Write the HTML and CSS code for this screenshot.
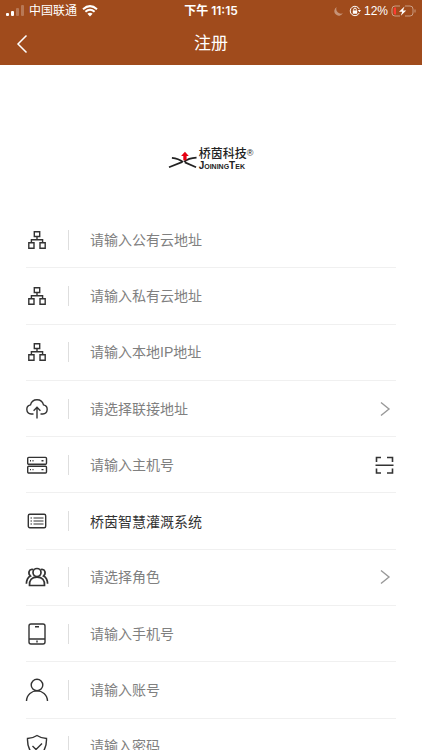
FILE: index.html
```html
<!DOCTYPE html>
<html lang="zh-CN">
<head>
<meta charset="utf-8">
<meta name="viewport" content="width=device-width, initial-scale=1">
<title>注册</title>
<link rel="stylesheet" href="styles.css">
</head>
<body>
<svg class="defs" aria-hidden="true">
  <symbol id="network" viewBox="0 0 24 24">
    <path d="M9.3 3.8h5.4v4.7H9.3zM3.8 14.8H9v5.4H3.8zM15 14.8h5.2v5.4H15zM12 8.5v3.2M6.4 14.8v-3.1h11.2v3.1"/>
  </symbol>
  <symbol id="chevron" viewBox="0 0 24 24">
    <path d="M9 5.5l8 6.5-8 6.5"/>
  </symbol>
</svg>
<header class="header">
  <div class="status">
    <div class="status-side">
      <svg class="signal" viewBox="0 0 18 12" aria-hidden="true">
        <rect x="0" y="8" width="3" height="3" rx="1"/><rect x="5" y="6" width="3" height="5" rx="1"/>
        <rect class="faint" x="10" y="3" width="3" height="8" rx="1"/><rect class="faint" x="15" y="0" width="3" height="11" rx="1"/>
      </svg>
      <span>中国联通</span>
      <svg class="wifi" viewBox="0 0 16 12" aria-hidden="true">
        <path d="M1 4.2Q8-2 15 4.2M3.4 6.8q4.6-4 9.2 0"/><path class="solid" d="M5.4 8.8q2.6-2 5.2 0L8 11.5z"/>
      </svg>
    </div>
    <time class="clock">下午 11:15</time>
    <div class="status-side status-right">
      <svg class="moon" viewBox="0 0 12 12" aria-hidden="true"><path d="M4 1.2A5 5 0 1 0 10.8 8 5.2 5.2 0 0 1 4 1.2z"/></svg>
      <svg class="lock" viewBox="0 0 12 12" aria-hidden="true">
        <path d="M10.3 4.2A4.7 4.7 0 1 0 10.2 8M4.7 5.6V4.4a1.3 1.3 0 0 1 2.6 0v1.2"/><path class="solid" d="M3.8 5.4h4.4v3.3H3.8zM8.8 5h3.2l-1.5 2.3z"/>
      </svg>
      <span>12%</span>
      <svg class="battery" viewBox="0 0 25 12" aria-hidden="true">
        <path class="shell" d="M9 1H4a3 3 0 0 0-3 3v4a3 3 0 0 0 3 3h5M14 1h5a3 3 0 0 1 3 3v4a3 3 0 0 1-3 3h-5M24 4.5v3"/>
        <path class="low" d="M4 2.6h1v6.8H4q-1.3 0-1.3-1.4V4q0-1.4 1.3-1.4z"/>
        <path class="bolt" d="M13.5 1.5L8 6.8h3.2L9.8 10.8 15.2 5.4H12z"/>
      </svg>
    </div>
  </div>
  <div class="navbar">
    <button class="back" type="button" aria-label="返回">
      <svg viewBox="0 0 12 20" aria-hidden="true"><path d="M10.5 1.5L2 10l8.5 8.5"/></svg>
    </button>
    <h1 class="title">注册</h1>
  </div>
</header>
<main class="content">
  <div class="brand">
    <svg class="brand-mark" viewBox="0 0 30 20" aria-hidden="true">
      <path d="M0 17.5L14 12M3 7.8Q10 8.5 14.5 12M15.5 11.8Q20 8 28.5 7.5M16.5 12.5l11.5 5"/>
      <path class="arrow" d="M16.5 1.5l4 4.3h-2.3v4.4h-3.4V5.8h-2.3z"/>
    </svg>
    <div class="brand-text">
      <div class="brand-name">桥茵科技<sup class="reg">®</sup></div>
      <div class="brand-latin">JoiningTek</div>
    </div>
  </div>
  <form class="form">
    <div class="row">
      <label class="icon" for="public" aria-label="公有云地址"><svg viewBox="1 1 22 22"><use href="#network" width="24" height="24"/></svg></label>
      <input class="field" id="public" type="text" placeholder="请输入公有云地址">
    </div>
    <div class="row">
      <label class="icon" for="private" aria-label="私有云地址"><svg viewBox="1 1 22 22"><use href="#network" width="24" height="24"/></svg></label>
      <input class="field" id="private" type="text" placeholder="请输入私有云地址">
    </div>
    <div class="row">
      <label class="icon" for="local" aria-label="本地IP地址"><svg viewBox="1 1 22 22"><use href="#network" width="24" height="24"/></svg></label>
      <input class="field" id="local" type="text" placeholder="请输入本地IP地址">
    </div>
    <div class="row">
      <label class="icon" for="link" aria-label="联接地址"><svg viewBox="1 1 22 22"><path d="M8.5 17H6.2A4.6 4.6 0 0 1 5.5 7.9A6.7 6.7 0 0 1 18.5 7.9A4.6 4.6 0 0 1 17.8 17H15.5M12 21.5V10.5M8.6 13.7L12 10.3l3.4 3.4"/></svg></label>
      <select class="field" id="link"><option>请选择联接地址</option></select>
      <svg class="chevron" viewBox="0 0 24 24" aria-hidden="true"><use href="#chevron"/></svg>
    </div>
    <div class="row">
      <label class="icon" for="host" aria-label="主机号"><svg viewBox="1 1 22 22"><rect x="2.7" y="4.4" width="18.8" height="6.8" rx="1"/><rect x="2.7" y="13.2" width="18.8" height="6.8" rx="1"/><path d="M5 7.8h1M7.5 7.8h1M16.5 7.8h2M5 16.6h1M7.5 16.6h1M16.5 16.6h2"/></svg></label>
      <input class="field" id="host" type="text" placeholder="请输入主机号">
      <button class="scan" type="button" aria-label="扫描"><svg viewBox="0 0 24 24"><path d="M4.5 9V4.5H9M15 4.5h5.5V9M4.5 15.5V20H9M15 20h5.5v-4.5M3.5 12.2h18"/></svg></button>
    </div>
    <div class="row">
      <label class="icon" for="system" aria-label="系统名称"><svg viewBox="1 1 22 22"><rect x="3.3" y="5.3" width="17.4" height="13.4" rx="1.5"/><path class="fine" d="M5.5 9h1.5M5.5 12h1.5M5.5 15h1.5M8.5 9h10M8.5 12h10M8.5 15h10"/></svg></label>
      <input class="field" id="system" type="text" value="桥茵智慧灌溉系统">
    </div>
    <div class="row">
      <label class="icon" for="role" aria-label="角色"><svg class="group" viewBox="1 1 22 22"><circle cx="12" cy="7.5" r="4"/><path d="M4.5 20.5Q4 12.2 12 12.2T19.5 20.5zM8.3 4.5C3.5 3.5 2.8 8.5 5.5 11Q1.5 13 1.4 18.8M15.7 4.5c4.8-1 5.5 4 2.8 6.5Q22.5 13 22.6 18.8"/></svg></label>
      <select class="field" id="role"><option>请选择角色</option></select>
      <svg class="chevron" viewBox="0 0 24 24" aria-hidden="true"><use href="#chevron"/></svg>
    </div>
    <div class="row">
      <label class="icon" for="phone" aria-label="手机号"><svg viewBox="1 1 22 22"><rect x="4" y="2" width="16" height="20" rx="2"/><path d="M4 17h16M10 4.7h4M12 18.5v2"/></svg></label>
      <input class="field" id="phone" type="tel" placeholder="请输入手机号">
    </div>
    <div class="row">
      <label class="icon" for="account" aria-label="账号"><svg viewBox="1 1 22 22"><circle cx="12" cy="7" r="5.8"/><path d="M1.5 23c.5-13.5 20.5-13.5 21 0"/></svg></label>
      <input class="field" id="account" type="text" placeholder="请输入账号">
    </div>
    <div class="row">
      <label class="icon" for="password" aria-label="密码"><svg viewBox="1 1 22 22"><path d="M12 1.5Q16.5 4.5 21.5 4.5C21.8 13 19.5 19 12 22.5C4.5 19 2.2 13 2.5 4.5Q7.5 4.5 12 1.5zM7.5 12l3.5 3.5L17 9.5"/></svg></label>
      <input class="field" id="password" type="password" placeholder="请输入密码">
    </div>
  </form>
</main>
</body>
</html>
```
FILE: styles.css
```css
* {
  box-sizing: border-box;
}

body {
  display: flex;
  flex-direction: column;
  height: 100vh;
  margin: 0;
  background: #fff;
  font-family: "Liberation Sans", "Noto Sans CJK SC", sans-serif;
}

svg {
  display: block;
  flex: none;
  overflow: visible;
  fill: none;
  stroke: currentColor;
}

button {
  display: flex;
  padding: 0;
  border: 0;
  background: none;
  color: inherit;
}

.defs {
  position: absolute;
  width: 0;
  height: 0;
}

.header {
  flex: none;
  background: #a04b1c;
  color: #fff;
}

.status {
  display: grid;
  grid-template-columns: 1fr auto 1fr;
  align-items: center;
  height: 22px;
  padding: 0 6px;
  font: 12px/22px Inter, "Noto Sans CJK SC", sans-serif;
}

.status-side {
  display: flex;
  align-items: center;
  gap: 5px;
}

.status-right {
  justify-content: flex-end;
  gap: 3px;
  font-family: "Liberation Sans", sans-serif;
}

.clock {
  font-weight: 600;
}

.signal {
  width: 18px;
  height: 12px;
  fill: currentColor;
  stroke: none;
}

.faint {
  opacity: 0.25;
}

.wifi {
  width: 16px;
  height: 12px;
  stroke-width: 2;
}

.solid {
  fill: currentColor;
  stroke: none;
}

.moon {
  width: 11px;
  height: 11px;
  margin-right: 2px;
  fill: currentColor;
  stroke: none;
  opacity: 0.4;
}

.lock {
  width: 12px;
  height: 12px;
}

.battery {
  width: 25px;
  height: 12px;
}

.shell {
  opacity: 0.45;
}

.low {
  fill: #ff3b30;
  stroke: none;
}

.bolt {
  fill: #fff;
  stroke: none;
}

.navbar {
  display: grid;
  grid-template-columns: 44px 1fr 44px;
  align-items: center;
  height: 43px;
}

.back {
  align-items: center;
  justify-content: center;
  height: 43px;
}

.back svg {
  width: 12px;
  height: 20px;
  stroke-width: 1.5;
}

.title {
  margin: 0;
  text-align: center;
  font-size: 17px;
  font-weight: 400;
  line-height: 43px;
}

.content {
  flex: 1;
  min-height: 0;
  overflow-y: auto;
  scrollbar-width: none;
}

.brand {
  display: flex;
  justify-content: center;
  gap: 1px;
  padding: 82px 0 42px;
  color: #222;
}

.brand-mark {
  width: 29px;
  height: 20px;
  margin-top: 3px;
  stroke-width: 1.8;
}

.arrow {
  fill: #e60012;
  stroke: none;
}

.brand-name {
  font-size: 12px;
  font-weight: 500;
  line-height: 15px;
}

.reg {
  font-size: 9px;
  line-height: 0;
  vertical-align: 2px;
}

.brand-latin {
  font-size: 10px;
  font-variant: small-caps;
  font-weight: 700;
  line-height: 8px;
}

.form {
  display: grid;
  grid-auto-rows: 1fr;
  min-height: 563px;
  padding: 0 26px;
}

.row {
  display: flex;
  align-items: center;
  border-bottom: 1px solid #f0f0f0;
}

.icon {
  display: flex;
  align-items: center;
  width: 43px;
  height: 20px;
  border-right: 1px solid #dedede;
  color: #333;
}

.icon svg {
  width: 22px;
  height: 22px;
  stroke-width: 1.4;
}

.icon .group {
  stroke-width: 1.7;
}

.icon .fine {
  stroke-width: 1.1;
}

.field {
  flex: 1;
  min-width: 0;
  height: 40px;
  margin: 0 0 0 21px;
  padding: 0;
  border: 0;
  outline: 0;
  appearance: none;
  background: none;
  color: #333;
  font: inherit;
  font-size: 14px;
}

.field::placeholder,
select.field {
  color: #808080;
  opacity: 1;
}

.chevron {
  width: 24px;
  height: 24px;
  color: #999;
  stroke-width: 1.4;
}

.scan svg {
  width: 24px;
  height: 24px;
  color: #333;
  stroke-width: 1.6;
}
```
